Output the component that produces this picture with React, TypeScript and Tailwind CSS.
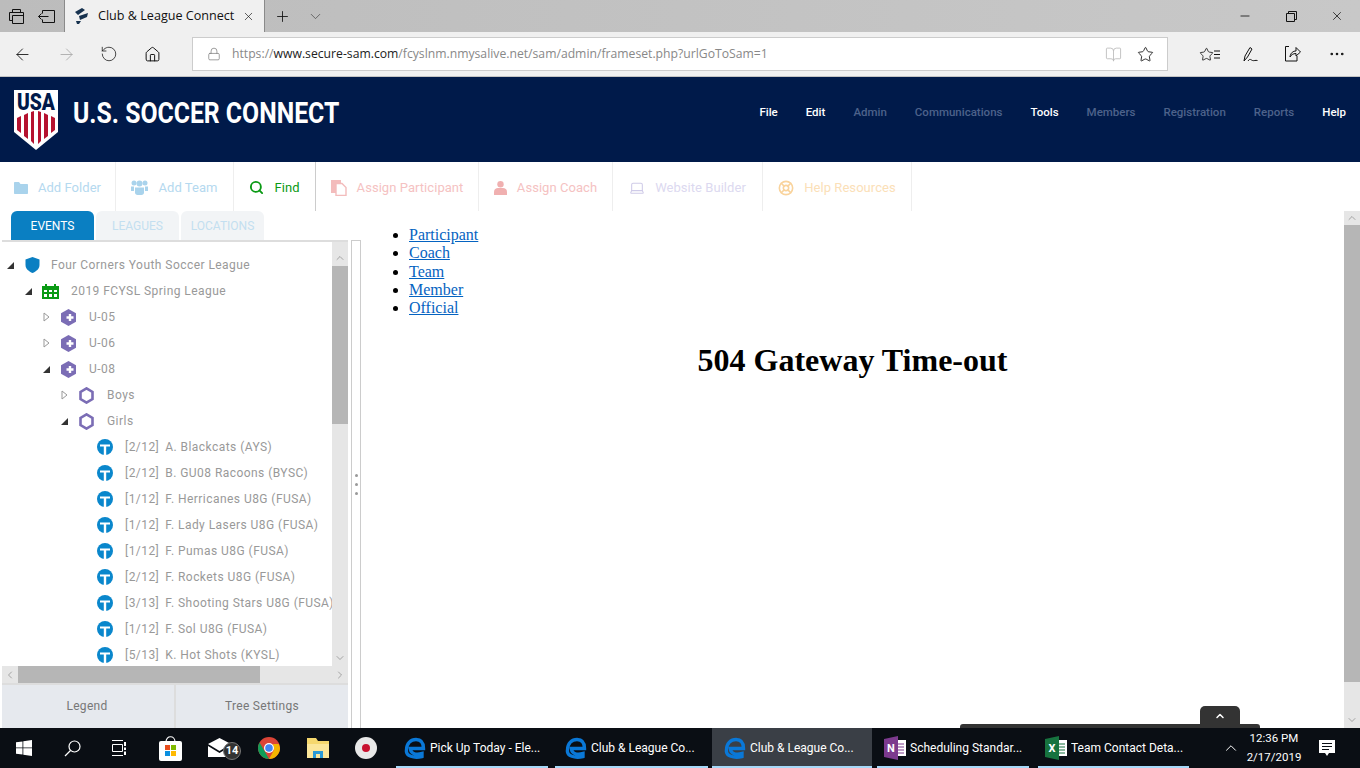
import React from 'react';
import {
  ArrowLeft, ArrowRight, RotateCw, Home, Lock, X, Plus, ChevronDown, ChevronUp, ChevronLeft, ChevronRight,
  Minus, Star, MoreHorizontal, Search, Laptop, LifeBuoy, BookOpen,
} from 'lucide-react';

const navItems = [
  { label: 'File', on: true },
  { label: 'Edit', on: true },
  { label: 'Admin', on: false },
  { label: 'Communications', on: false },
  { label: 'Tools', on: true },
  { label: 'Members', on: false },
  { label: 'Registration', on: false },
  { label: 'Reports', on: false },
  { label: 'Help', on: true },
];

const teams = [
  ['[2/12]', 'A. Blackcats (AYS)'],
  ['[2/12]', 'B. GU08 Racoons (BYSC)'],
  ['[1/12]', 'F. Herricanes U8G (FUSA)'],
  ['[1/12]', 'F. Lady Lasers U8G (FUSA)'],
  ['[1/12]', 'F. Pumas U8G (FUSA)'],
  ['[2/12]', 'F. Rockets U8G (FUSA)'],
  ['[3/13]', 'F. Shooting Stars U8G (FUSA)'],
  ['[1/12]', 'F. Sol U8G (FUSA)'],
  ['[5/13]', 'K. Hot Shots (KYSL)'],
];

function UsaLogo() {
  return (
    <svg width="46" height="62" viewBox="0 0 46 62">
      <path d="M1 1H45V43L23 61L1 43Z" fill="#fff" />
      <text x="23" y="21" textAnchor="middle" fontFamily="Roboto" fontWeight="900" fontSize="23" fill="#001a4a" textLength="38" lengthAdjust="spacingAndGlyphs">USA</text>
      <path d="M4 29L8 27V44L4 41Z M11 26L15 24V50L11 47Z M18 23L21 22V55L18 52Z M25 22L28 23V52L25 55Z M31 24L35 26V47L31 50Z M38 27L42 29V41L38 44Z" fill="#b5122f" />
    </svg>
  );
}

function EdgeIcon() {
  return (
    <svg width="22" height="22" viewBox="0 0 22 22" fill="none">
      <path d="M2.500 13C2.500 6 7 2.500 12 2.500C17 2.500 19.500 6 19.500 11.500H6.500C6.500 16 11 18.500 18 16.500V19.500C10 21.500 1.500 19 2.500 13Z" stroke="#0a78d7" strokeWidth="3.400" fill="none" />
    </svg>
  );
}

function OfficeIcon({ letter, color }: { letter: string; color: string }) {
  return (
    <svg width="22" height="24" viewBox="0 0 22 24">
      <rect x="9" y="4" width="13" height="16" fill="#fff" />
      <path d="M12 8H20M12 11H20M12 14H20M12 17H20" stroke={color} strokeWidth="1.200" />
      <path d="M0 3L14 0V24L0 21Z" fill={color} />
      <text x="7" y="16" textAnchor="middle" fontFamily="Roboto" fontWeight="700" fontSize="11" fill="#fff">{letter}</text>
    </svg>
  );
}

function TreeArrow({ open }: { open: boolean }) {
  if (open) {
    return (
      <svg width="7" height="7" viewBox="0 0 7 7"><path d="M7 0V7H0Z" fill="#333" /></svg>
    );
  }
  return (
    <svg width="7" height="10" viewBox="0 0 7 10"><path d="M1 1L6 5L1 9Z" fill="#fff" stroke="#999" /></svg>
  );
}

function HexPlus() {
  return (
    <svg width="15" height="17" viewBox="0 0 15 17">
      <path d="M7.500 0L15 4.200V12.800L7.500 17L0 12.800V4.200Z" fill="#7b6db5" />
      <path d="M9 5V12M5.500 8.500H12.500" stroke="#fff" strokeWidth="2.400" />
    </svg>
  );
}

function HexRing() {
  return (
    <svg width="15" height="17" viewBox="0 0 15 17">
      <path d="M7.500 1.400L13.500 5V12L7.500 15.600L1.500 12V5Z" fill="#fff" stroke="#7b6db5" strokeWidth="2.600" />
    </svg>
  );
}

function TeamIcon() {
  return (
    <svg width="16" height="16" viewBox="0 0 16 16">
      <circle cx="8" cy="8" r="8" fill="#0a87cc" />
      <path d="M3 5.500H13V7.500H9.200V16H6.800V7.500H3Z" fill="#fff" />
    </svg>
  );
}

function ShieldIcon() {
  return (
    <svg width="15" height="16" viewBox="0 0 15 16">
      <path d="M7.500 0L14.500 2.500V8C14.500 12 11 14.500 7.500 16C4 14.500 0.500 12 0.500 8V2.500Z" fill="#0a7fc2" />
    </svg>
  );
}

function CalendarIcon() {
  return (
    <svg width="17" height="15" viewBox="0 0 17 15">
      <path d="M3 0H5V2H12V0H14V2H17V15H0V2H3Z" fill="#0a9a14" />
      <path d="M2 6H5V8H2ZM7 6H10V8H7ZM12 6H15V8H12ZM2 10H5V13H2ZM7 10H10V13H7ZM12 10H15V13H12Z" fill="#fff" />
    </svg>
  );
}

function FolderIcon() {
  return (
    <svg width="14" height="12" viewBox="0 0 14 12"><path d="M1 0H5L6.500 2H13C13.600 2 14 2.400 14 3V11C14 11.600 13.600 12 13 12H1C.4 12 0 11.600 0 11V1C0 .4 .4 0 1 0Z" fill="#a9d3ec" /></svg>
  );
}

function TeamGroupIcon() {
  return (
    <svg width="17" height="15" viewBox="0 0 17 15" fill="#a9d3ec">
      <circle cx="3" cy="3" r="2.500" />
      <circle cx="14" cy="3" r="2.500" />
      <circle cx="8.500" cy="3.500" r="3" />
      <path d="M0 6.500H3V11H0ZM14 6.500H17V11H14Z" />
      <path d="M4 7.500H13V12.500C13 14 12 15 10.500 15H6.500C5 15 4 14 4 12.500Z" />
    </svg>
  );
}

function DocsIcon() {
  return (
    <svg width="16" height="16" viewBox="0 0 16 16">
      <rect width="10" height="13" fill="#f3bcbc" />
      <path d="M5 3.500H11L15 7.500V15.500H5Z" fill="#fff" stroke="#f3bcbc" strokeWidth="1.400" />
    </svg>
  );
}

function CoachIcon() {
  return (
    <svg width="13" height="14" viewBox="0 0 13 14" fill="#f0b0b0">
      <circle cx="6.500" cy="3.200" r="3.200" />
      <path d="M0 11C0 8 2 7 4 7H9C11 7 13 8 13 11V14H0Z" />
    </svg>
  );
}

function TreeRow({ pad, arrow, icon, children }: { pad: string; arrow?: 'open' | 'closed'; icon: React.ReactNode; children: React.ReactNode }) {
  return (
    <div className={`flex h-[26px] shrink-0 items-center whitespace-nowrap ${pad}`}>
      <span className="flex w-[15px] shrink-0 items-center justify-center">
        {arrow && <TreeArrow open={arrow === 'open'} />}
      </span>
      <span className="ml-[5px] flex w-[19px] shrink-0 items-center justify-center">{icon}</span>
      <span className="ml-[9px] text-[12px] leading-none tracking-[0.45px] text-[#999]">{children}</span>
    </div>
  );
}

function ToolItem({ icon, label, className, border, width }: { icon: React.ReactNode; label: string; className: string; border: string; width: string }) {
  return (
    <div className={`flex h-full items-center justify-center gap-[10px] border-r pt-[2px] text-[13px] tracking-[0.05px] ${width} ${border} ${className}`}>
      {icon}
      <span>{label}</span>
    </div>
  );
}

function TaskApp({ icon, label, className, line, active }: { icon: React.ReactNode; label: string; className: string; line: string; active?: boolean }) {
  return (
    <div className={`relative flex h-full shrink-0 items-center gap-[4px] text-[12px] text-white ${className} ${active ? 'bg-[#3a3f46]' : ''}`}>
      {icon}
      <span className="truncate">{label}</span>
      <span className={`absolute bottom-0 h-[2px] bg-[#a6d8f8] ${line}`} />
    </div>
  );
}

export default function App() {
  return (
    <div className="relative flex h-[768px] w-[1360px] flex-col overflow-hidden bg-white font-['Roboto',sans-serif]">
      {/* browser tabs */}
      <div className="flex h-[32px] shrink-0 items-center bg-gradient-to-r from-[#bcbcbc] to-[#c8c8c8] text-[#111]">
        <div className="flex h-full w-[64px] items-center justify-around px-[2px]">
          <svg width="15" height="15" viewBox="0 0 15 15" fill="none" stroke="#111"><path d="M3.500 3.500V.5H11.500V3.500M.5 3.500H14.500V14.500H3.500V6.500H14.500M.5 3.500V11.500H3.500" /></svg>
          <svg width="17" height="13" viewBox="0 0 17 13" fill="none" stroke="#111"><path d="M4.500 3.500V.5H16.500V12.500H4.500V9.500M.5 6.500H10.500M3.500 3.500L.5 6.500L3.500 9.500" /></svg>
        </div>
        <div className="flex h-full w-[201px] items-center border-x border-[#8a8a8a] bg-[#f0f0f0] pl-[9px]">
          <svg width="15" height="16" viewBox="0 0 15 16" fill="#17324f"><path d="M1 4L8 0L11 2L4 7ZM5 8L14 5L13 9L6 12ZM2 13L7 13L5 16L3 16Z" /></svg>
          <span className="ml-[9px] font-['Open_Sans',sans-serif] text-[12.600px] whitespace-nowrap">Club &amp; League Connect</span>
          <X className="ml-[8px] h-[13px] w-[13px]" strokeWidth={1.200} />
        </div>
        <Plus className="ml-[9px] h-[17px] w-[17px]" strokeWidth={1.200} />
        <ChevronDown className="ml-[16px] h-[17px] w-[17px] text-[#444]" strokeWidth={1} />
        <div className="ml-auto flex h-full items-center text-black">
          <span className="flex w-[46px] justify-center"><Minus className="h-[14px] w-[14px]" strokeWidth={1.300} /></span>
          <span className="flex w-[46px] justify-center">
            <svg width="11" height="11" viewBox="0 0 11 11" fill="none" stroke="#111"><path d="M2.500 2.500V.5H10.500V8.500H8.500M.5 2.500H8.500V10.500H.5Z" /></svg>
          </span>
          <span className="flex w-[46px] justify-center"><X className="h-[14px] w-[14px]" strokeWidth={1.200} /></span>
        </div>
      </div>

      {/* address bar */}
      <div className="flex h-[45px] shrink-0 items-center border-b border-[#c4c4c4] bg-[#f0f0f0] text-[#111]">
        <div className="flex w-[192px] items-center">
          <ArrowLeft className="ml-[13px] h-[19px] w-[19px]" strokeWidth={1.100} />
          <ArrowRight className="ml-[25px] h-[19px] w-[19px] text-[#aaa]" strokeWidth={1.100} />
          <RotateCw className="ml-[24px] h-[18px] w-[18px] -scale-x-100" strokeWidth={1} />
          <Home className="ml-[26px] h-[17px] w-[17px]" strokeWidth={1.400} />
        </div>
        <div className="flex h-[34px] w-[976px] items-center border border-[#ccc] bg-white pl-[14px]">
          <Lock className="h-[14px] w-[14px] text-[#777]" strokeWidth={1.200} />
          <span className="ml-[11px] font-['Open_Sans',sans-serif] text-[12.200px] whitespace-nowrap text-[#888]">
            https://<span className="text-[#222]">www.secure-sam.com</span>/fcyslnm.nmysalive.net/sam/admin/frameset.php?urlGoToSam=1
          </span>
          <BookOpen className="ml-auto h-[17px] w-[17px] text-[#bbb]" strokeWidth={1.200} />
          <Star className="mr-[13px] ml-[15px] h-[17px] w-[17px] text-[#111]" strokeWidth={1.200} />
        </div>
        <div className="flex flex-1 items-center text-[#111]">
          <span className="ml-[31px] flex w-[17px] items-center">
            <Star className="h-[15px] w-[15px] shrink-0" strokeWidth={1.300} />
            <svg className="shrink-0" width="6" height="9" viewBox="0 0 6 9" stroke="#111"><path d="M0 1H6M0 4.500H6M0 8H6" /></svg>
          </span>
          <svg className="ml-[27px]" width="15" height="17" viewBox="0 0 15 17" fill="none" stroke="#111"><path d="M1 15L2 10L7 1.500L9 3L4.500 11L1 15ZM5 15C7 12 8 14 9.500 14.500C11 15 12.500 14 14.500 14.500" /></svg>
          <svg className="ml-[27px]" width="16" height="16" viewBox="0 0 16 16" fill="none" stroke="#111"><path d="M4 .5H.5V15H12V10M5 11C5.500 6.500 8.500 5 11 5V1.500L15.500 6L11 10V7.500C8 7.500 6 9 5 11Z" /></svg>
          <MoreHorizontal className="ml-[27px] h-[18px] w-[18px]" strokeWidth={1.500} />
        </div>
      </div>

      {/* site header */}
      <header className="flex h-[85px] shrink-0 items-center bg-[#001a4a]">
        <div className="ml-[13px] flex items-center">
          <UsaLogo />
          <span className="mb-[14px] ml-[14px] origin-left scale-x-[0.826] text-[30px] font-bold whitespace-nowrap text-white">U.S. SOCCER CONNECT</span>
        </div>
        <nav className="mr-[14px] mb-[13px] ml-auto flex items-center gap-[28px] text-[11.500px] font-medium">
          {navItems.map(item => (
            <span key={item.label} className={item.on ? 'text-white' : 'text-[#4d628a]'}>{item.label}</span>
          ))}
        </nav>
      </header>

      {/* toolbar */}
      <div className="flex h-[49px] shrink-0 items-stretch bg-white">
        <ToolItem width="w-[116px]" border="border-[#eee]" className="text-[#b5d9ef]" icon={<FolderIcon />} label="Add Folder" />
        <ToolItem width="w-[118px]" border="border-[#eee]" className="text-[#b5d9ef]" icon={<TeamGroupIcon />} label="Add Team" />
        <ToolItem width="w-[82px]" border="border-[#ccc]" className="text-[#0a9a14]" icon={<Search className="h-[15px] w-[15px] text-[#0a9a14]" strokeWidth={3} />} label="Find" />
        <ToolItem width="w-[163px]" border="border-[#eee]" className="text-[#f5c2c2]" icon={<DocsIcon />} label="Assign Participant" />
        <ToolItem width="w-[134px]" border="border-[#eee]" className="text-[#f5c2c2]" icon={<CoachIcon />} label="Assign Coach" />
        <ToolItem width="w-[150px]" border="border-[#eee]" className="text-[#dcd9f0]" icon={<Laptop className="h-[16px] w-[16px] text-[#cfcbe8]" strokeWidth={1.600} />} label="Website Builder" />
        <ToolItem width="w-[149px]" border="border-[#eee]" className="text-[#fbe0b8]" icon={<LifeBuoy className="h-[16px] w-[16px] text-[#f9d39c]" strokeWidth={2.400} />} label="Help Resources" />
      </div>

      {/* work area */}
      <div className="flex min-h-0 flex-1">
        <aside className="flex w-[361px] shrink-0 flex-col">
          <div className="flex h-[29px] shrink-0 items-end gap-[2px] pl-[11px] text-[12px]">
            <div className="flex h-[29px] w-[83px] items-center justify-center rounded-t-[6px] bg-[#0a7fc2] text-white">EVENTS</div>
            <div className="flex h-[29px] w-[83px] items-center justify-center rounded-t-[6px] bg-[#f2f4f6] text-[#c3dff0]">LEAGUES</div>
            <div className="flex h-[29px] w-[83px] items-center justify-center rounded-t-[6px] bg-[#f2f4f6] text-[#c3dff0]">LOCATIONS</div>
          </div>
          <div className="flex min-h-0 flex-1">
            <div className="ml-[2px] flex w-[346px] shrink-0 flex-col">
              <div className="h-[2px] shrink-0 bg-[#ddd]" />
              <div className="flex min-h-0 flex-1">
                <div className="min-w-0 flex-1 overflow-hidden pt-[10px]">
                  <div className="flex h-[416px] flex-col overflow-hidden">
                    <TreeRow pad="pl-[1px]" arrow="open" icon={<ShieldIcon />}>Four Corners Youth Soccer League</TreeRow>
                    <TreeRow pad="pl-[19px]" arrow="open" icon={<CalendarIcon />}><span className="ml-[2px]">2019 FCYSL Spring League</span></TreeRow>
                    <TreeRow pad="pl-[37px]" arrow="closed" icon={<HexPlus />}><span className="ml-[2px]">U-05</span></TreeRow>
                    <TreeRow pad="pl-[37px]" arrow="closed" icon={<HexPlus />}><span className="ml-[2px]">U-06</span></TreeRow>
                    <TreeRow pad="pl-[37px]" arrow="open" icon={<HexPlus />}><span className="ml-[2px]">U-08</span></TreeRow>
                    <TreeRow pad="pl-[55px]" arrow="closed" icon={<HexRing />}><span className="ml-[2px]">Boys</span></TreeRow>
                    <TreeRow pad="pl-[55px]" arrow="open" icon={<HexRing />}><span className="ml-[2px]">Girls</span></TreeRow>
                    {teams.map(([count, name]) => (
                      <TreeRow key={name} pad="pl-[73px]" icon={<TeamIcon />}>
                        <span className="ml-[2px]">{count}<span className="ml-[6px]">{name}</span></span>
                      </TreeRow>
                    ))}
                  </div>
                </div>
                <div className="flex w-[16px] shrink-0 flex-col bg-[#e6e6e6] text-[#777]">
                  <div className="mt-[8px] flex h-[16px] items-center justify-center"><ChevronUp className="h-[12px] w-[12px]" strokeWidth={1.200} /></div>
                  <div className="h-[158px] bg-[#b6b6b6]" />
                  <div className="flex-1" />
                  <div className="flex h-[16px] items-center justify-center"><ChevronDown className="h-[12px] w-[12px]" strokeWidth={1.200} /></div>
                </div>
              </div>
              <div className="flex h-[17px] shrink-0 bg-[#e6e6e6] text-[#777]">
                <div className="flex w-[16px] items-center justify-center"><ChevronLeft className="h-[12px] w-[12px]" strokeWidth={1.200} /></div>
                <div className="w-[242px] bg-[#b6b6b6]" />
                <div className="ml-auto flex w-[16px] items-center justify-center"><ChevronRight className="h-[12px] w-[12px]" strokeWidth={1.200} /></div>
              </div>
              <div className="flex h-[45px] shrink-0 gap-[2px] border-t-2 border-[#ddd] bg-[#ddd] text-[12px] tracking-[0.3px] text-[#777]">
                <div className="flex w-[172px] items-center justify-center bg-[#e6e9ee] pr-[2px] pb-[2px]">Legend</div>
                <div className="flex flex-1 items-center justify-center bg-[#e6e9ee] pb-[2px]">Tree Settings</div>
              </div>
            </div>
            <div className="ml-[3px] flex w-[10px] shrink-0 flex-col items-center justify-center gap-[6px] border-x border-t border-[#ccc]">
              <span className="h-[3px] w-[3px] rounded-full bg-[#999]" />
              <span className="h-[3px] w-[3px] rounded-full bg-[#999]" />
              <span className="h-[3px] w-[3px] rounded-full bg-[#999]" />
            </div>
          </div>
        </aside>

        <main className="min-w-0 flex-1 font-['Liberation_Serif',serif] text-[16px] text-black">
          <ul className="mt-[15px] ml-[48px] list-disc leading-[18.300px]">
            {['Participant', 'Coach', 'Team', 'Member', 'Official'].map(label => (
              <li key={label}><a className="text-[#0563c1] underline">{label}</a></li>
            ))}
          </ul>
          <h1 className="mt-[19px] text-center text-[32px] font-bold">504 Gateway Time-out</h1>
        </main>

        <div className="flex w-[16px] shrink-0 flex-col bg-[#e6e6e6] text-[#777]">
          <div className="flex h-[14px] items-center justify-center"><ChevronUp className="h-[12px] w-[12px]" strokeWidth={1.200} /></div>
          <div className="h-[457px] bg-[#b6b6b6]" />
          <div className="flex-1" />
          <div className="flex h-[16px] items-center justify-center"><ChevronDown className="h-[12px] w-[12px]" strokeWidth={1.200} /></div>
        </div>
      </div>

      {/* taskbar */}
      <div className="flex h-[40px] shrink-0 items-center bg-[#0a0e14] text-white">
        <div className="ml-[16px] w-[48px]">
          <svg width="16" height="16" viewBox="0 0 16 16" fill="#fff"><path d="M0 2.300L6.500 1.400V7.500H0ZM7.300 1.300L16 0V7.500H7.300ZM0 8.300H6.500V14.600L0 13.700ZM7.300 8.300H16V16L7.300 14.700Z" /></svg>
        </div>
        <div className="w-[48px]">
          <svg width="17" height="17" viewBox="0 0 17 17" fill="none" stroke="#fff" strokeWidth="1.200"><circle cx="10.500" cy="6.500" r="5.500" /><path d="M6.500 10.500L1 16" /></svg>
        </div>
        <div className="w-[47px]">
          <svg width="16" height="16" viewBox="0 0 16 16" fill="none" stroke="#fff"><path d="M0 .5H11M0 15.500H11M.5 4.500H10.500V11.500H.5Z" /><path d="M13 2V6M13 7.500V10M13 11.500V15" strokeWidth="2" /></svg>
        </div>
        <div className="w-[49px]">
          <svg width="23" height="26" viewBox="0 0 23 26">
            <path d="M7 7C7 0 16 0 16 7" fill="none" stroke="#fff" strokeWidth="1.200" />
            <rect y="6" width="23" height="20" rx="2" fill="#fff" />
            <rect x="6" y="10" width="5" height="5" fill="#e74c1c" />
            <rect x="12" y="10" width="5" height="5" fill="#7fba00" />
            <rect x="6" y="16" width="5" height="5" fill="#0a8fe0" />
            <rect x="12" y="16" width="5" height="5" fill="#ffb900" />
          </svg>
        </div>
        <div className="relative w-[50px]">
          <svg width="23" height="20" viewBox="0 0 23 20" fill="#fff"><path d="M0 6L11.500 0L23 6L11.500 13ZM0 8L11.500 15L23 8V19H0Z" /></svg>
          <span className="absolute top-[4px] left-[15px] flex h-[18px] w-[18px] items-center justify-center rounded-full border border-[#777] bg-[#333] text-[11px] font-bold">14</span>
        </div>
        <div className="w-[49px]">
          <svg width="22" height="22" viewBox="0 0 22 22">
            <circle cx="11" cy="11" r="11" fill="#db4437" />
            <path d="M11 22A11 11 0 0 1 1.500 5.500L6.500 14L11 22Z" fill="#0f9d58" />
            <path d="M22 11A11 11 0 0 1 11 22L16 13L15 7H20.800Z" fill="#f4b400" />
            <circle cx="11" cy="11" r="5" fill="#fff" />
            <circle cx="11" cy="11" r="3.800" fill="#4285f4" />
          </svg>
        </div>
        <div className="w-[48px]">
          <svg width="22" height="20" viewBox="0 0 22 20">
            <path d="M0 0H9L11 3H22V20H0Z" fill="#f5d76e" />
            <rect x="0" y="6" width="22" height="14" fill="#fbe69a" />
            <path d="M6 20V13H16V20H13V16H9V20Z" fill="#2a9ad6" />
          </svg>
        </div>
        <div className="w-[39px]">
          <svg width="22" height="22" viewBox="0 0 22 22"><circle cx="11" cy="11" r="11" fill="#e8e8e8" /><circle cx="11" cy="11" r="4" fill="#c8102e" /></svg>
        </div>
        <TaskApp className="w-[159px] pl-[10px]" line="left-[2px] right-[5px]" icon={<EdgeIcon />} label="Pick Up Today - Ele..." />
        <TaskApp className="w-[159px] pl-[12px]" line="left-[2px] right-[4px]" icon={<EdgeIcon />} label="Club & League Co..." />
        <TaskApp className="w-[160px] pl-[12px]" line="left-0 right-0" active icon={<EdgeIcon />} label="Club & League Co..." />
        <TaskApp className="ml-[5px] w-[161px] pl-[7px]" line="left-0 right-[9px]" icon={<OfficeIcon letter="N" color="#7c3a8e" />} label="Scheduling Standar..." />
        <TaskApp className="w-[155px] pl-[7px]" line="left-0 right-[4px]" icon={<OfficeIcon letter="X" color="#17733f" />} label="Team Contact Deta..." />
        <ChevronUp className="ml-[29px] h-[18px] w-[18px]" strokeWidth={1.300} />
        <div className="ml-[3px] flex w-[62px] flex-col items-center text-[11.500px] leading-[19px]">
          <span>12:36 PM</span>
          <span>2/17/2019</span>
        </div>
        <svg className="ml-[14px]" width="16" height="17" viewBox="0 0 16 17" fill="#fff">
          <path d="M0 0H16V13H10L8 16L6 13H0Z" />
          <path d="M3 3.500H13M3 6.500H13M3 9.500H10" stroke="#0a0e14" />
        </svg>
      </div>

      {/* collapsed panel handle sitting over the taskbar edge */}
      <div className="absolute top-[724px] left-[960px] h-[4px] w-[300px] rounded-t-[3px] bg-[#333]" />
      <div className="absolute top-[706px] left-[1200px] flex h-[20px] w-[40px] items-center justify-center rounded-t-[5px] bg-[#333] text-white">
        <ChevronUp className="h-[12px] w-[12px]" strokeWidth={3} />
      </div>
    </div>
  );
}
